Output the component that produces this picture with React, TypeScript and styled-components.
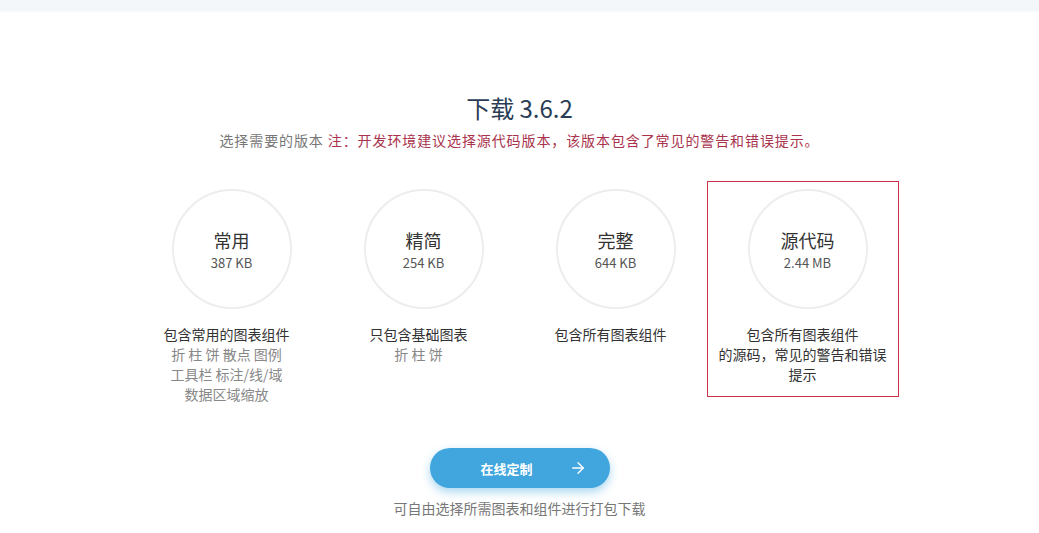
import React from "react";
import styled, { createGlobalStyle } from "styled-components";
import { ArrowRight } from "lucide-react";

const GlobalStyle = createGlobalStyle`
  body {
    margin: 0;
    background: #fff;
    font-family: "Noto Sans CJK SC", "Noto Sans", sans-serif;
  }
`;

const TopBar = styled.div`
  height: 12px;
  background: linear-gradient(#f4f7fa 85%, #f8fbfb);
`;

const Main = styled.div`
  display: flex;
  flex-direction: column;
  align-items: center;
  padding-top: 80px;
`;

const Title = styled.h1`
  margin: 0;
  font-size: 24px;
  line-height: 32px;
  font-weight: 400;
  color: #293c55;
`;

const Subtitle = styled.p`
  margin: 6px 0 0;
  font-size: 14px;
  line-height: 20px;
  letter-spacing: 0.9px;
  color: #777;
`;

const Note = styled.span`
  color: #a9334c;
`;

const Versions = styled.div`
  display: grid;
  grid-template-columns: repeat(4, 192px);
  align-items: start;
  margin-top: 31px;
  padding-right: 10px;
`;

const Version = styled.div<{ $active?: boolean }>`
  box-sizing: border-box;
  padding: 7px 0 12px;
  border: 1px solid ${(p) => (p.$active ? "#c9334a" : "transparent")};
  text-align: center;
`;

const CircleRow = styled.div`
  display: flex;
  justify-content: center;
  padding-left: 10px;
`;

const Circle = styled.div`
  box-sizing: border-box;
  width: 120px;
  height: 120px;
  border-radius: 50%;
  border: 2px solid #ededed;
  display: flex;
  flex-direction: column;
  align-items: center;
  justify-content: center;
  padding-top: 3px;
`;

const Name = styled.div`
  font-size: 18px;
  line-height: 24px;
  color: #333;
`;

const Size = styled.div`
  font-size: 13px;
  line-height: 22px;
  color: #555;
`;

const Desc = styled.div`
  margin-top: 15px;
`;

const Line = styled.div<{ $muted?: boolean }>`
  font-size: 14px;
  line-height: 20px;
  color: ${(p) => (p.$muted ? "#888" : "#333")};
`;

const Button = styled.button`
  margin-top: 31px;
  box-sizing: border-box;
  width: 180px;
  height: 40px;
  border: 0;
  border-radius: 20px;
  background: #40a6dd;
  box-shadow: 0 4px 10px rgba(64, 166, 221, 0.45);
  color: #fff;
  font-family: inherit;
  font-size: 13px;
  font-weight: 700;
  display: flex;
  align-items: center;
  justify-content: center;
  gap: 36px;
  padding-left: 34px;
  cursor: pointer;
`;

const Caption = styled.p`
  margin: 10px 0 0;
  font-size: 14px;
  line-height: 20px;
  color: #777;
`;

interface IVersion {
  name: string;
  size: string;
  lines: { text: string; muted?: boolean }[];
  active?: boolean;
}

const versions: IVersion[] = [
  {
    name: "常用",
    size: "387 KB",
    lines: [
      { text: "包含常用的图表组件" },
      { text: "折 柱 饼 散点 图例", muted: true },
      { text: "工具栏 标注/线/域", muted: true },
      { text: "数据区域缩放", muted: true },
    ],
  },
  {
    name: "精简",
    size: "254 KB",
    lines: [{ text: "只包含基础图表" }, { text: "折 柱 饼", muted: true }],
  },
  {
    name: "完整",
    size: "644 KB",
    lines: [{ text: "包含所有图表组件" }],
  },
  {
    name: "源代码",
    size: "2.44 MB",
    lines: [
      { text: "包含所有图表组件" },
      { text: "的源码，常见的警告和错误" },
      { text: "提示" },
    ],
    active: true,
  },
];

const App: React.FC = () => {
  return (
    <>
      <GlobalStyle />
      <TopBar />
      <Main>
        <Title>下载 3.6.2</Title>
        <Subtitle>
          选择需要的版本 <Note>注：开发环境建议选择源代码版本，该版本包含了常见的警告和错误提示。</Note>
        </Subtitle>
        <Versions>
          {versions.map((v) => (
            <Version key={v.name} $active={v.active}>
              <CircleRow>
                <Circle>
                  <Name>{v.name}</Name>
                  <Size>{v.size}</Size>
                </Circle>
              </CircleRow>
              <Desc>
                {v.lines.map((l) => (
                  <Line key={l.text} $muted={l.muted}>
                    {l.text}
                  </Line>
                ))}
              </Desc>
            </Version>
          ))}
        </Versions>
        <Button>
          <span>在线定制</span>
          <ArrowRight size={18} strokeWidth={1.8} />
        </Button>
        <Caption>可自由选择所需图表和组件进行打包下载</Caption>
      </Main>
    </>
  );
};

export default App;
